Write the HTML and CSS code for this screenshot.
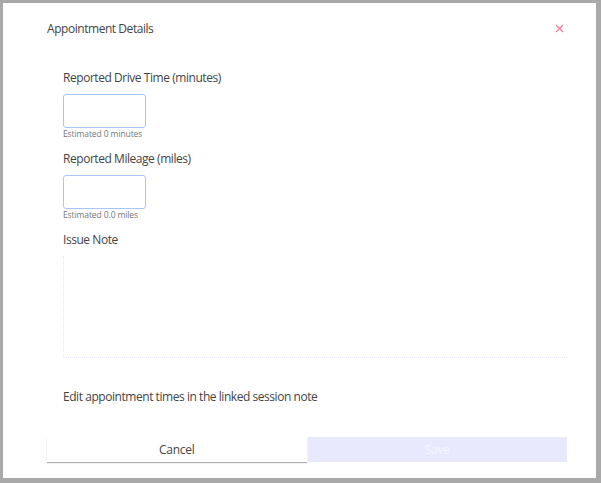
FILE: index.html
```html
<!DOCTYPE html>
<html lang="en">
<head>
    <meta charset="UTF-8">
    <title>Appointment Details</title>
    <link rel="stylesheet" href="styles.css">
</head>
<body>
    <div class="modal">
        <div class="modal-header">
            <span class="modal-title">Appointment Details</span>
            <span class="close">
                <svg width="9" height="9" viewBox="0 0 9 9"><path d="M1 1L8 8M8 1L1 8" stroke="#f07f93" stroke-width="1.2"/></svg>
            </span>
        </div>
        <div class="form">
            <label class="label">Reported Drive Time (minutes)</label>
            <input class="field" type="text">
            <div class="helper">Estimated 0 minutes</div>

            <label class="label">Reported Mileage (miles)</label>
            <input class="field" type="text">
            <div class="helper">Estimated 0.0 miles</div>

            <label class="label">Issue Note</label>
            <textarea class="note"></textarea>

            <p class="hint">Edit appointment times in the linked session note</p>
        </div>
        <div class="actions">
            <button class="btn cancel">Cancel</button>
            <button class="btn save" disabled>Save</button>
        </div>
    </div>
</body>
</html>
```

FILE: styles.css
```css
body {
    margin: 0;
    background: #a9a9a9;
    font-family: "Open Sans", sans-serif;
    color: #444;
}
.modal {
    background: #fff;
    margin: 3px 5px 5px 3px;
    height: 475px;
    box-sizing: border-box;
    padding: 15px 29px 0 44px;
    font-size: 12px;
    letter-spacing: -0.45px;
}
.modal-header {
    display: flex;
    justify-content: space-between;
    align-items: center;
    height: 20px;
}
.close {
    display: flex;
    margin-right: 3px;
}
.form {
    display: flex;
    flex-direction: column;
    align-items: flex-start;
    padding-left: 16px;
    padding-top: 30px;
}
.label {
    line-height: 20px;
    margin-bottom: 6px;
}
.field {
    width: 83px;
    height: 34px;
    box-sizing: border-box;
    border: 1px solid #a6c6f4;
    border-radius: 3px;
    padding: 0 6px;
    margin: 0;
}
.helper {
    font-size: 8.5px;
    letter-spacing: -0.1px;
    line-height: 12px;
    color: #777;
    margin-bottom: 9px;
}
.note {
    width: 100%;
    height: 102px;
    box-sizing: border-box;
    border: none;
    border-left: 1px dotted #e6e6f6;
    border-bottom: 1px dotted #e6e6f6;
    resize: none;
    margin: 0;
}
.hint {
    line-height: 20px;
    margin: 29px 0 0;
}
.actions {
    display: flex;
    gap: 1px;
    margin-top: 30px;
}
.btn {
    flex: 1;
    height: 25px;
    border: none;
    font-family: inherit;
    font-size: 12px;
    letter-spacing: -0.3px;
    padding: 0;
}
.cancel {
    background: #fff;
    color: #444;
    box-shadow: 0 1px 1px rgba(0, 0, 0, 0.3);
}
.save {
    background: #e9e9fd;
    color: #f6f6ff;
}
```
